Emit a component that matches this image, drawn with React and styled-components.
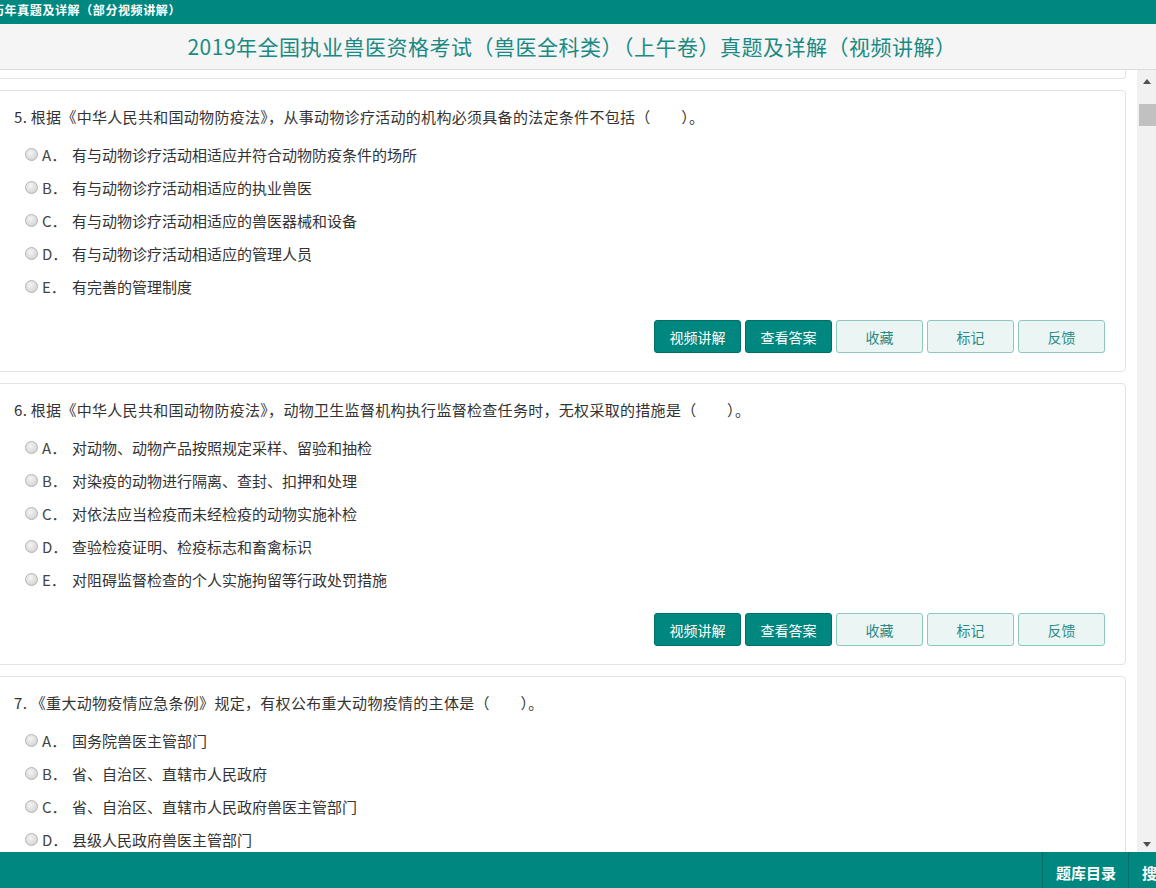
import React from "react";
import styled, { createGlobalStyle } from "styled-components";

const TEAL = "#00877f";
const FONT = '"Microsoft YaHei", "Noto Sans CJK SC", "Noto Sans", sans-serif';

const GlobalStyle = createGlobalStyle`
  html, body { margin: 0; padding: 0; overflow: hidden; }
  body { font-family: ${FONT}; background: #fff; color: #333; }
  * { box-sizing: border-box; }
`;

const Page = styled.div`
  width: 1156px;
  height: 888px;
  display: flex;
  flex-direction: column;
  overflow: hidden;
`;

const TopBar = styled.div`
  height: 24px;
  flex: none;
  background: ${TEAL};
  color: #fff;
  font-size: 12px;
  font-weight: bold;
  letter-spacing: 0.6px;
  line-height: 19px;
  white-space: nowrap;
  overflow: hidden;
  text-indent: -8px;
`;

const TitleBar = styled.div`
  height: 46px;
  flex: none;
  background: #f5f5f5;
  border-bottom: 1px solid #dcdcdc;
  color: #1a8a84;
  font-size: 21px;
  letter-spacing: 0.5px;
  line-height: 45px;
  text-align: center;
  padding-right: 12px;
`;

const Main = styled.div`
  flex: 1;
  min-height: 0;
  display: flex;
`;

const Content = styled.div`
  flex: 1;
  min-width: 0;
  overflow: hidden;
  padding-right: 11px;
`;

const List = styled.div`
  margin-left: -10px;
  display: flex;
  flex-direction: column;
  gap: 11px;
`;

const PrevCard = styled.div`
  height: 9px;
  border: 1px solid #e3e3e3;
  border-top: none;
  border-radius: 0 0 4px 4px;
`;

const Card = styled.div`
  flex: none;
  height: 282px;
  border: 1px solid #e3e3e3;
  border-radius: 4px;
  padding: 15px 20px 17px 23px;
  display: flex;
  flex-direction: column;
`;

const Question = styled.div`
  font-size: 15px;
  letter-spacing: 0.3px;
  line-height: 22px;
  color: #333;
  white-space: nowrap;
`;

const Options = styled.div`
  margin-top: 10px;
  padding-left: 11px;
  display: flex;
  flex-direction: column;
`;

const Option = styled.label`
  height: 33px;
  display: flex;
  align-items: center;
  font-size: 15px;
  color: #333;
  white-space: nowrap;
`;

const Radio = styled.span`
  width: 13px;
  height: 13px;
  flex: none;
  border-radius: 50%;
  border: 1px solid #b4b4b4;
  background: radial-gradient(circle at 40% 35%, #f4f4f4 0%, #dcdcdc 60%, #c8c8c8 100%);
  margin-right: 4px;
`;

const Letter = styled.span`
  width: 30px;
  flex: none;
  color: #444;
`;

const Actions = styled.div`
  margin-top: 17px;
  display: flex;
  justify-content: flex-end;
  gap: 4px;
`;

const Button = styled.button`
  width: 87px;
  height: 33px;
  border-radius: 3px;
  font-family: ${FONT};
  font-size: 14px;
  padding: 0;
  cursor: pointer;
  border: 1px solid ${(p) => (p.$primary ? "#006f68" : "#8ec6c0")};
  background: ${(p) => (p.$primary ? TEAL : "#ebf6f4")};
  color: ${(p) => (p.$primary ? "#fff" : "#2b8a84")};
`;

const Scrollbar = styled.div`
  width: 19px;
  flex: none;
  background: #f1f1f1;
  display: flex;
  flex-direction: column;
  align-items: center;
`;

const Arrow = styled.div`
  width: 0;
  height: 0;
  border-left: 4px solid transparent;
  border-right: 4px solid transparent;
  ${(p) =>
    p.$up
      ? `border-bottom: 5px solid #505050; margin-top: 9px;`
      : `border-top: 5px solid #505050; margin-top: auto; margin-bottom: 5px;`}
`;

const Thumb = styled.div`
  width: 17px;
  height: 22px;
  margin-left: 2px;
  margin-top: 20px;
  background: #c1c1c1;
`;

const BottomBar = styled.div`
  height: 36px;
  flex: none;
  background: ${TEAL};
  display: flex;
  justify-content: flex-end;
  overflow: hidden;
`;

const Nav = styled.div`
  flex: none;
  display: flex;
  margin-right: -28px;
`;

const NavItem = styled.div`
  flex: none;
  padding: 0 12px 0 13px;
  color: #fff;
  font-size: 15px;
  font-weight: bold;
  line-height: 42px;
  border-left: 1px solid #006e67;
  white-space: nowrap;
`;

const questions = [
  {
    no: 5,
    text: "根据《中华人民共和国动物防疫法》，从事动物诊疗活动的机构必须具备的法定条件不包括（　　）。",
    options: [
      "有与动物诊疗活动相适应并符合动物防疫条件的场所",
      "有与动物诊疗活动相适应的执业兽医",
      "有与动物诊疗活动相适应的兽医器械和设备",
      "有与动物诊疗活动相适应的管理人员",
      "有完善的管理制度",
    ],
  },
  {
    no: 6,
    text: "根据《中华人民共和国动物防疫法》，动物卫生监督机构执行监督检查任务时，无权采取的措施是（　　）。",
    options: [
      "对动物、动物产品按照规定采样、留验和抽检",
      "对染疫的动物进行隔离、查封、扣押和处理",
      "对依法应当检疫而未经检疫的动物实施补检",
      "查验检疫证明、检疫标志和畜禽标识",
      "对阻碍监督检查的个人实施拘留等行政处罚措施",
    ],
  },
  {
    no: 7,
    text: "《重大动物疫情应急条例》规定，有权公布重大动物疫情的主体是（　　）。",
    options: [
      "国务院兽医主管部门",
      "省、自治区、直辖市人民政府",
      "省、自治区、直辖市人民政府兽医主管部门",
      "县级人民政府兽医主管部门",
      "县级以上人民政府",
    ],
  },
];

const letters = ["A", "B", "C", "D", "E"];

export default function App() {
  return (
    <>
      <GlobalStyle />
      <Page>
        <TopBar>历年真题及详解（部分视频讲解）</TopBar>
        <TitleBar>
          2019年全国执业兽医资格考试（兽医全科类）（上午卷）真题及详解（视频讲解）
        </TitleBar>
        <Main>
          <Content>
            <List>
              <PrevCard />
              {questions.map((q) => (
                <Card key={q.no}>
                  <Question>
                    {q.no}. {q.text}
                  </Question>
                  <Options>
                    {q.options.map((o, i) => (
                      <Option key={i}>
                        <Radio />
                        <Letter>{letters[i]}．</Letter>
                        {o}
                      </Option>
                    ))}
                  </Options>
                  <Actions>
                    <Button $primary>视频讲解</Button>
                    <Button $primary>查看答案</Button>
                    <Button>收藏</Button>
                    <Button>标记</Button>
                    <Button>反馈</Button>
                  </Actions>
                </Card>
              ))}
            </List>
          </Content>
          <Scrollbar>
            <Arrow $up />
            <Thumb />
            <Arrow />
          </Scrollbar>
        </Main>
        <BottomBar>
          <Nav>
            <NavItem>题库目录</NavItem>
            <NavItem>搜索</NavItem>
          </Nav>
        </BottomBar>
      </Page>
    </>
  );
}
